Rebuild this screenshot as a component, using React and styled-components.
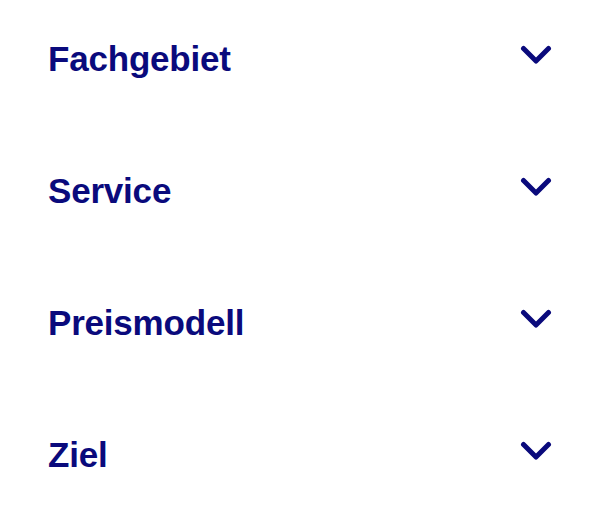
import React from "react";
import styled, { createGlobalStyle } from "styled-components";

const GlobalStyle = createGlobalStyle`
  body {
    margin: 0;
    background: #ffffff;
    font-family: "Liberation Sans", Arial, sans-serif;
  }
`;

const filters = ["Fachgebiet", "Service", "Preismodell", "Ziel"];

const List = styled.div`
  display: flex;
  flex-direction: column;
  gap: 64px;
  padding: 24px 48px 0 48px;
`;

const Row = styled.button`
  display: flex;
  align-items: center;
  justify-content: space-between;
  height: 68px;
  width: 100%;
  padding: 0;
  border: none;
  background: none;
  cursor: pointer;
  color: #0a0a7c;
`;

const Label = styled.span`
  font-family: "Liberation Sans", Arial, sans-serif;
  font-weight: 700;
  font-size: 35px;
  letter-spacing: -0.2px;
  line-height: 1;
`;

const Chevron = styled.svg`
  width: 32px;
  height: 20px;
  margin-top: -6px;
  flex-shrink: 0;
`;

const ChevronDown = () => (
  <Chevron viewBox="0 0 32 20" fill="none">
    <path
      d="M3.5 3.5 L16 16 L28.5 3.5"
      stroke="currentColor"
      strokeWidth="5"
      strokeLinecap="round"
      strokeLinejoin="round"
    />
  </Chevron>
);

export default function App() {
  return (
    <>
      <GlobalStyle />
      <List>
        {filters.map((f) => (
          <Row key={f}>
            <Label>{f}</Label>
            <ChevronDown />
          </Row>
        ))}
      </List>
    </>
  );
}
